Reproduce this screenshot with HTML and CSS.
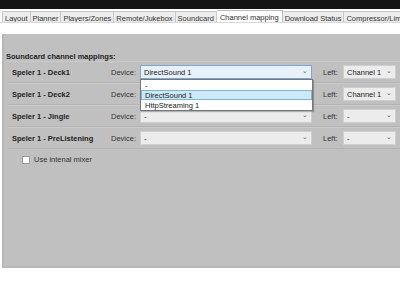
FILE: index.html
```html
<!DOCTYPE html>
<html lang="en">
<head>
    <meta charset="UTF-8">
    <title>Channel mapping</title>
    <link rel="stylesheet" href="styles.css">
</head>
<body>
    <div class="topbar"></div>
    <div class="tabs">
        <span class="tab">Layout</span>
        <span class="tab">Planner</span>
        <span class="tab">Players/Zones</span>
        <span class="tab">Remote/Jukebox</span>
        <span class="tab">Soundcard</span>
        <span class="tab active">Channel mapping</span>
        <span class="tab">Download Status</span>
        <span class="tab">Compressor/Limiter</span>
    </div>

    <div class="panel">
        <h2>Soundcard channel mappings:</h2>

        <div class="row">
            <span class="player">Speler 1 - Deck1</span>
            <span class="lbl">Device:</span>
            <div class="dev-wrap">
                <span class="select device open">DirectSound 1<i>&#8964;</i></span>
                <ul class="dropdown">
                    <li>-</li>
                    <li class="sel">DirectSound 1</li>
                    <li>HttpStreaming 1</li>
                </ul>
            </div>
            <span class="lbl left">Left:</span>
            <span class="select chan">Channel 1<i>&#8964;</i></span>
        </div>
        <div class="row">
            <span class="player">Speler 1 - Deck2</span>
            <span class="lbl">Device:</span>
            <div class="dev-wrap"><span class="select device">DirectSound 1<i>&#8964;</i></span></div>
            <span class="lbl left">Left:</span>
            <span class="select chan">Channel 1<i>&#8964;</i></span>
        </div>
        <div class="row">
            <span class="player">Speler 1 - Jingle</span>
            <span class="lbl">Device:</span>
            <div class="dev-wrap"><span class="select device">-<i>&#8964;</i></span></div>
            <span class="lbl left">Left:</span>
            <span class="select chan">-<i>&#8964;</i></span>
        </div>
        <div class="row">
            <span class="player">Speler 1 - PreListening</span>
            <span class="lbl">Device:</span>
            <div class="dev-wrap"><span class="select device">-<i>&#8964;</i></span></div>
            <span class="lbl left">Left:</span>
            <span class="select chan">-<i>&#8964;</i></span>
        </div>

        <label class="mixer"><span class="box"></span>Use intenal mixer</label>
    </div>
</body>
</html>
```

FILE: styles.css
```css
* { margin: 0; padding: 0; box-sizing: border-box; }
body { background: #fff; font-family: "Liberation Sans", Arial, sans-serif; font-size: 7.5px; color: #222; width: 400px; height: 287px; overflow: hidden; }
.topbar { height: 9px; background: #141414; }
.tabs { display: flex; height: 13px; margin-top: 1px; padding-left: 2px; white-space: nowrap; overflow: hidden; border-bottom: 1px solid #d8d8d8; }
.tab { flex: none; padding: 2px 2px 0; height: 12px; margin-top: 1px; background: #ececec; border: 1px solid #c8c8c8; border-bottom: none; border-left: none; color: #333; }
.tab:first-child { border-left: 1px solid #c8c8c8; }
.tab.active { background: #fff; margin-top: 0; height: 13px; border-color: #bbb; padding: 2px 3px 0; }
.panel { margin: 11px 0 0 2px; height: 234px; background: #c0c0c0; border-left: 2px solid #b6b6b6; border-bottom: 2px solid #b8b8b8; padding-top: 19px; }
h2 { font-size: 7.5px; font-weight: bold; padding-left: 2px; color: #222; height: 8px; line-height: 8px; }
.row { display: flex; align-items: center; height: 22px; margin-left: 4px; border-top: 1px solid #cacaca; border-bottom: 1px solid #b4b4b4; }
.player { width: 103px; padding-left: 4px; font-weight: bold; }
.lbl { width: 29px; color: #333; }
.lbl.left { width: 20px; padding-left: 11px; box-sizing: content-box; }
.dev-wrap { position: relative; }
.select { display: flex; justify-content: space-between; align-items: center; height: 14px; padding: 0 3px; background: #ececec; border: 1px solid #cfcfcf; color: #222; }
.select i { font-style: normal; font-size: 7px; color: #666; line-height: 1; margin-top: -4px; }
.device { width: 172px; }
.device.open { background: #e6f1fb; border-color: #7ea6cf; }
.chan { width: 53px; }
.dropdown { position: absolute; left: 0; top: 14px; width: 173px; list-style: none; background: #fff; border: 1px solid #777; box-shadow: 1px 1px 1px rgba(0,0,0,0.25); z-index: 2; }
.dropdown li { height: 10px; line-height: 10px; padding-left: 3px; border: 1px solid transparent; }
.dropdown li.sel { background: #cde8f7; border-color: #7eb4d3; }
.mixer { display: flex; align-items: center; margin: 6px 0 0 18px; color: #333; }
.box { width: 8px; height: 8px; background: #fff; border: 1px solid #999; margin-right: 4px; }
```
